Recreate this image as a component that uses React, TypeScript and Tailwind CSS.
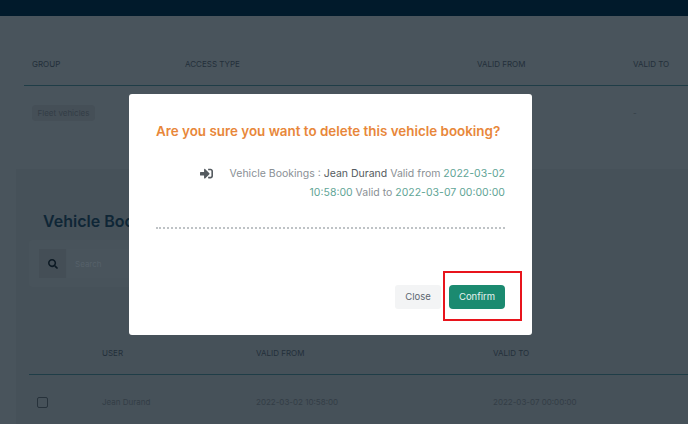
import { FaSearch, FaSignInAlt } from 'react-icons/fa'

const font = { fontFamily: 'Inter, "Noto Sans", sans-serif' }

function Modal() {
  return (
    <div className="absolute left-[129px] top-[94px] flex h-[241px] w-[403px] flex-col rounded-[3px] bg-white px-[27px]">
      <h2 className="mt-[27px] whitespace-nowrap text-[13.4px] leading-[20px] font-semibold text-[#e8873a]">
        Are you sure you want to delete this vehicle booking?
      </h2>
      <div className="mt-[23px] flex">
        <FaSignInAlt className="ml-[44px] mt-[3px] h-[13px] w-[13px] shrink-0 text-[#555b60]" />
        <p className="ml-[16px] w-[277px] text-right text-[10.5px] leading-[19px] text-[#8a9095]">
          Vehicle Bookings : <span className="text-[#555b60]">Jean Durand</span> Valid from{' '}
          <span className="whitespace-nowrap text-[#5fa596]">2022-03-02</span>{' '}
          <span className="text-[#5fa596]">10:58:00</span> Valid to{' '}
          <span className="whitespace-nowrap text-[#5fa596]">2022-03-07</span>{' '}
          <span className="text-[#5fa596]">00:00:00</span>
        </p>
      </div>
      <div className="mt-[25px] border-t-2 border-dotted border-[#bfc3c6]" />
      <div className="mt-auto mb-[26px] flex items-center justify-end gap-2">
        <button className="h-[24px] w-[46px] rounded-[3px] bg-[#f3f4f5] text-[9.5px] text-[#5c6670]">Close</button>
        <div className="relative">
          <button className="block h-[24px] w-[56px] rounded-[4px] bg-[#1b8a70] text-[9.5px] text-[#e6f3ef]">Confirm</button>
          <div className="absolute -left-[6px] -top-[14px] h-[50px] w-[79px] border-2 border-[#e8141c]" />
        </div>
      </div>
    </div>
  )
}

export default function App() {
  return (
    <div className="relative h-[424px] w-[688px] overflow-hidden bg-[#465159]" style={font}>
      <div className="h-4 bg-[#011a2b]" />
      <div className="flex">
        <div className="h-[408px] w-[16px] shrink-0 bg-[#49545c]" />
        <div className="min-w-0 flex-1">
          <section className="h-[153px] bg-[#49545c] pt-[8px]">
            <div className="ml-[8px] grid h-[62px] grid-cols-[153px_292px_156px_1fr] items-end border-b border-[#1f3d47] pb-[15px] pl-[8px] text-[8px] leading-[12px] text-[#232f3a]">
              <span>GROUP</span>
              <span>ACCESS TYPE</span>
              <span>VALID FROM</span>
              <span>VALID TO</span>
            </div>
            <div className="ml-[8px] mt-[19px] grid grid-cols-[153px_292px_156px_1fr] items-center pl-[8px] text-[8px] leading-[12px] text-[#333d46]">
              <span className="w-[63px] rounded-[4px] bg-[#454f57] py-[2px] text-center">Fleet vehicles</span>
              <span />
              <span>2022-03-07</span>
              <span>-</span>
            </div>
          </section>
          <section className="pl-[13px] pt-[40px]">
            <h3 className="ml-[14px] text-[16px] leading-[24px] font-semibold text-[#0f2636]">Vehicle Bookings</h3>
            <div className="mt-[7px] flex h-[47px] w-[110px] items-center rounded-[3px] bg-[#48535b] pl-[10px]">
              <div className="flex h-[29px] w-[27px] items-center justify-center bg-[#444e56]">
                <FaSearch className="h-[10px] w-[10px] text-[#0d1a24]" />
              </div>
              <span className="ml-[1px] flex h-[29px] flex-1 items-center bg-[#49545c] pl-[8px] text-[8px] text-[#56616a]">Search</span>
            </div>
            <div className="mt-[54px] grid h-[34px] grid-cols-[73px_154px_237px_1fr] border-b border-[#1f3d47] pt-[6px] text-[8px] leading-[12px] text-[#232f3a]">
              <span />
              <span>USER</span>
              <span>VALID FROM</span>
              <span>VALID TO</span>
            </div>
            <div className="mt-[21px] grid grid-cols-[73px_154px_237px_1fr] items-center text-[8px] leading-[12px] text-[#333d46]">
              <span className="ml-[8px] h-[11px] w-[11px] rounded-[2px] border border-[#27323b]" />
              <span>Jean Durand</span>
              <span>2022-03-02 10:58:00</span>
              <span>2022-03-07 00:00:00</span>
            </div>
          </section>
        </div>
      </div>
      <Modal />
    </div>
  )
}
